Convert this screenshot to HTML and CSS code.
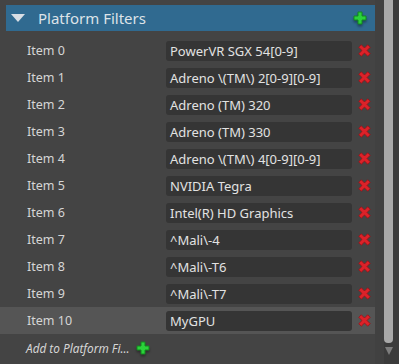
FILE: index.html
```html
<!DOCTYPE html>
<html lang="en">
	<head>
		<meta charset="utf-8">
		<link rel="stylesheet" href="styles.css">
	</head>

	<body>
		<div class="frame">
			<div class="panel">
				<div class="header">
					<span class="arrow"></span>
					<span class="title">Platform Filters</span>
					<svg class="plus big" viewBox="0 0 14 14"><path d="M5 1h4v4h4v4h-4v4h-4v-4h-4v-4h4z" fill="#2bd13a" stroke="#138a1e" stroke-width="1"/></svg>
				</div>

				<div class="rows">
					<div class="row"><span class="label">Item 0</span><div class="field">PowerVR SGX 54[0-9]</div><svg class="del" viewBox="0 0 13 13"><path d="M0.8 3.3l2.5-2.5 3.2 3.2 3.2-3.2 2.5 2.5-3.2 3.2 3.2 3.2-2.5 2.5-3.2-3.2-3.2 3.2-2.5-2.5 3.2-3.2z" fill="#dc2229" stroke="#9a1218" stroke-width="0.8"/></svg></div>
					<div class="row"><span class="label">Item 1</span><div class="field">Adreno \(TM\) 2[0-9][0-9]</div><svg class="del" viewBox="0 0 13 13"><path d="M0.8 3.3l2.5-2.5 3.2 3.2 3.2-3.2 2.5 2.5-3.2 3.2 3.2 3.2-2.5 2.5-3.2-3.2-3.2 3.2-2.5-2.5 3.2-3.2z" fill="#dc2229" stroke="#9a1218" stroke-width="0.8"/></svg></div>
					<div class="row"><span class="label">Item 2</span><div class="field">Adreno (TM) 320</div><svg class="del" viewBox="0 0 13 13"><path d="M0.8 3.3l2.5-2.5 3.2 3.2 3.2-3.2 2.5 2.5-3.2 3.2 3.2 3.2-2.5 2.5-3.2-3.2-3.2 3.2-2.5-2.5 3.2-3.2z" fill="#dc2229" stroke="#9a1218" stroke-width="0.8"/></svg></div>
					<div class="row"><span class="label">Item 3</span><div class="field">Adreno (TM) 330</div><svg class="del" viewBox="0 0 13 13"><path d="M0.8 3.3l2.5-2.5 3.2 3.2 3.2-3.2 2.5 2.5-3.2 3.2 3.2 3.2-2.5 2.5-3.2-3.2-3.2 3.2-2.5-2.5 3.2-3.2z" fill="#dc2229" stroke="#9a1218" stroke-width="0.8"/></svg></div>
					<div class="row"><span class="label">Item 4</span><div class="field">Adreno \(TM\) 4[0-9][0-9]</div><svg class="del" viewBox="0 0 13 13"><path d="M0.8 3.3l2.5-2.5 3.2 3.2 3.2-3.2 2.5 2.5-3.2 3.2 3.2 3.2-2.5 2.5-3.2-3.2-3.2 3.2-2.5-2.5 3.2-3.2z" fill="#dc2229" stroke="#9a1218" stroke-width="0.8"/></svg></div>
					<div class="row"><span class="label">Item 5</span><div class="field">NVIDIA Tegra</div><svg class="del" viewBox="0 0 13 13"><path d="M0.8 3.3l2.5-2.5 3.2 3.2 3.2-3.2 2.5 2.5-3.2 3.2 3.2 3.2-2.5 2.5-3.2-3.2-3.2 3.2-2.5-2.5 3.2-3.2z" fill="#dc2229" stroke="#9a1218" stroke-width="0.8"/></svg></div>
					<div class="row"><span class="label">Item 6</span><div class="field">Intel(R) HD Graphics</div><svg class="del" viewBox="0 0 13 13"><path d="M0.8 3.3l2.5-2.5 3.2 3.2 3.2-3.2 2.5 2.5-3.2 3.2 3.2 3.2-2.5 2.5-3.2-3.2-3.2 3.2-2.5-2.5 3.2-3.2z" fill="#dc2229" stroke="#9a1218" stroke-width="0.8"/></svg></div>
					<div class="row"><span class="label">Item 7</span><div class="field">^Mali\-4</div><svg class="del" viewBox="0 0 13 13"><path d="M0.8 3.3l2.5-2.5 3.2 3.2 3.2-3.2 2.5 2.5-3.2 3.2 3.2 3.2-2.5 2.5-3.2-3.2-3.2 3.2-2.5-2.5 3.2-3.2z" fill="#dc2229" stroke="#9a1218" stroke-width="0.8"/></svg></div>
					<div class="row"><span class="label">Item 8</span><div class="field">^Mali\-T6</div><svg class="del" viewBox="0 0 13 13"><path d="M0.8 3.3l2.5-2.5 3.2 3.2 3.2-3.2 2.5 2.5-3.2 3.2 3.2 3.2-2.5 2.5-3.2-3.2-3.2 3.2-2.5-2.5 3.2-3.2z" fill="#dc2229" stroke="#9a1218" stroke-width="0.8"/></svg></div>
					<div class="row"><span class="label">Item 9</span><div class="field">^Mali\-T7</div><svg class="del" viewBox="0 0 13 13"><path d="M0.8 3.3l2.5-2.5 3.2 3.2 3.2-3.2 2.5 2.5-3.2 3.2 3.2 3.2-2.5 2.5-3.2-3.2-3.2 3.2-2.5-2.5 3.2-3.2z" fill="#dc2229" stroke="#9a1218" stroke-width="0.8"/></svg></div>
					<div class="row selected"><span class="label">Item 10</span><div class="field">MyGPU</div><svg class="del" viewBox="0 0 13 13"><path d="M0.8 3.3l2.5-2.5 3.2 3.2 3.2-3.2 2.5 2.5-3.2 3.2 3.2 3.2-2.5 2.5-3.2-3.2-3.2 3.2-2.5-2.5 3.2-3.2z" fill="#dc2229" stroke="#9a1218" stroke-width="0.8"/></svg></div>
					<div class="add">
						<span class="add-text">Add to Platform Fi...</span>
						<svg class="plus" viewBox="0 0 14 14"><path d="M5 1h4v4h4v4h-4v4h-4v-4h-4v-4h4z" fill="#2bd13a" stroke="#138a1e" stroke-width="1"/></svg>
					</div>
				</div>
			</div>

			<div class="gutter"></div>

			<div class="scrollbar">
				<div class="thumb"></div>
				<div class="down"></div>
			</div>
		</div>
	</body>
</html>
```

FILE: styles.css
```css
body {
	margin: 0;
	background-color: #444444;
	font-family: "Noto Sans", "Open Sans", sans-serif;
	color: #d6d6d6;
}

.frame {
	display: flex;
	height: 364px;
}

.panel {
	width: 375px;
	padding-top: 5px;
}

.header {
	display: flex;
	align-items: center;
	height: 26px;
	margin-left: 6px;
	background-color: #306a90;
}

.arrow {
	width: 0;
	height: 0;
	margin-left: 5px;
	border-left: 7px solid transparent;
	border-right: 7px solid transparent;
	border-top: 8px solid #d8dee4;
}

.title {
	margin-left: 13px;
	font-size: 15px;
	color: #dde3e8;
	flex: 1;
}

.plus {
	width: 14px;
	height: 14px;
	filter: drop-shadow(0px 2px 1px rgba(0, 0, 0, 0.35));
}

.plus.big {
	margin-right: 8px;
}

.rows {
	margin-top: 6px;
}

.row {
	display: flex;
	align-items: center;
	height: 27px;
}

.selected {
	background-color: #555555;
}

.label {
	width: 139px;
	padding-left: 27px;
	font-size: 12.5px;
}

.field {
	width: 182px;
	height: 20px;
	line-height: 20px;
	padding-left: 4px;
	border-radius: 3px;
	background-color: #353535;
	font-size: 13px;
	color: #e2e2e2;
}

.del {
	width: 13px;
	height: 13px;
	margin-left: 6px;
}

.add {
	display: flex;
	align-items: center;
	height: 27px;
	padding-left: 26px;
}

.add-text {
	font-style: italic;
	font-size: 11.8px;
	margin-right: 6px;
}

.gutter {
	width: 9px;
	background-color: #414141;
}

.scrollbar {
	width: 15px;
	display: flex;
	flex-direction: column;
	background-color: #3b3b3b;
}

.thumb {
	width: 9px;
	height: 343px;
	background-color: #a9a9a9;
	border-radius: 0 0 4px 4px;
}

.down {
	width: 0;
	height: 0;
	margin-top: 4px;
	margin-left: 1px;
	border-left: 4px solid transparent;
	border-right: 4px solid transparent;
	border-top: 8px solid #7d7d7d;
}
```
